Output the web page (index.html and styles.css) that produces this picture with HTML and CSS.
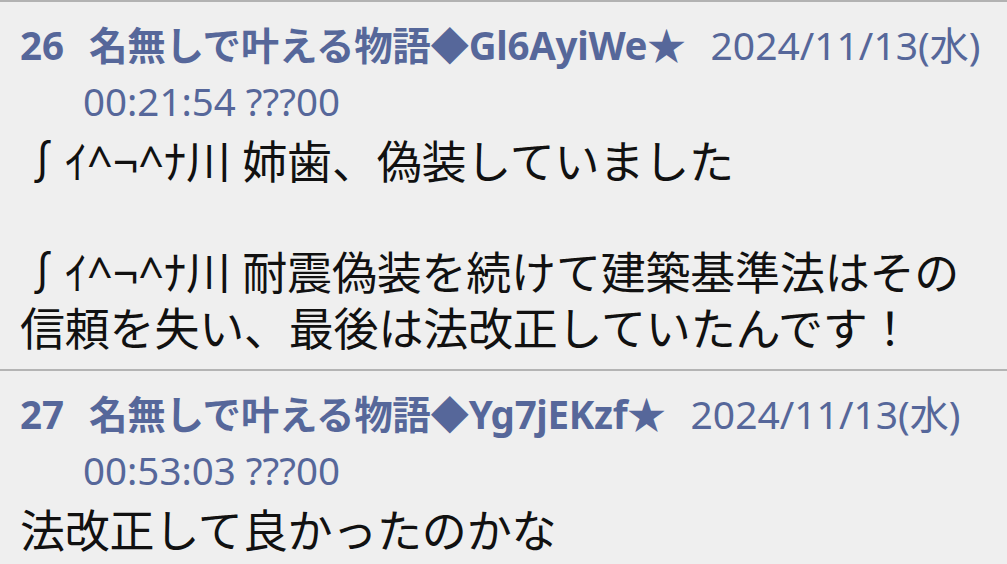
FILE: index.html
```html
<!DOCTYPE html>
<html lang="ja">
<head>
    <meta charset="UTF-8">
    <meta name="viewport" content="width=device-width, initial-scale=1.0">
    <title>スレッド</title>
    <link rel="stylesheet" href="styles.css">
</head>
<body>
    <div class="thread">
        <!-- res 26 -->
        <div class="post">
            <div class="post-head">
                <span class="num">26</span><span class="name">名無しで叶える物語◆Gl6AyiWe★</span> <span class="date">2024/11/13(水)</span> <span class="time">00:21:54 ???00</span>
            </div>
            <div class="post-body">
                ∫ｲ^¬^ﾅ川 姉歯、偽装していました<br>
                <br>
                ∫ｲ^¬^ﾅ川 耐震偽装を続けて建築基準法はその信頼を失い、最後は法改正していたんです！
            </div>
        </div>

        <!-- res 27 -->
        <div class="post">
            <div class="post-head">
                <span class="num">27</span><span class="name">名無しで叶える物語◆Yg7jEKzf★</span> <span class="date">2024/11/13(水)</span> <span class="time">00:53:03 ???00</span>
            </div>
            <div class="post-body">
                法改正して良かったのかな
            </div>
        </div>
    </div>
</body>
</html>
```

FILE: styles.css
```css
body {
    margin: 0;
    background-color: #efefef;
    font-family: "Noto Sans", "Noto Sans CJK JP", sans-serif;
    overflow: hidden;
}
.thread {
    border-top: 2px solid #b2b2b2;
}
.post {
    padding: 15px 20px 13px 20px;
    border-bottom: 2px solid #b4b4b4;
}
.post-head {
    color: #56679a;
    font-size: 38.5px;
    line-height: 56px;
    padding-left: 63px;
    text-indent: -63px;
}
.num {
    font-weight: 700;
    margin-right: 25px;
}
.name {
    font-weight: 700;
    letter-spacing: -0.3px;
    white-space: nowrap;
    margin-right: 15px;
}
.date {
    font-size: 39px;
}
.post-body {
    margin-top: 5px;
    color: #111;
    font-size: 45px;
    line-height: 55.5px;
    letter-spacing: -0.2px;
}
```
